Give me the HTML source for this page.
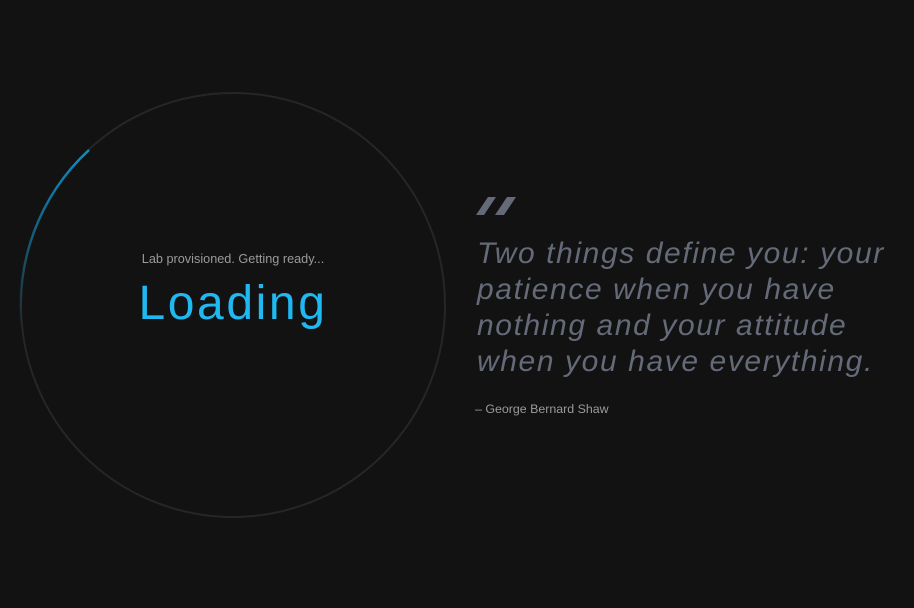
<!DOCTYPE html>
<html><head><style>
html,body{margin:0;padding:0;background:#121212;width:914px;height:608px;overflow:hidden;font-family:"Liberation Sans",sans-serif}
.sub{position:absolute;left:0;width:466px;top:252px;text-align:center;color:#9a9a9a;font-size:12.7px}
.load{position:absolute;left:0;width:466px;top:276px;text-align:center;color:#1fb8f0;font-size:48px;letter-spacing:2.6px}
.q{position:absolute;left:477px;top:236px;color:#646a78;font-style:italic;font-size:30px;line-height:36px;letter-spacing:1.6px;white-space:nowrap}
.a{position:absolute;left:475px;top:402px;color:#9a9a9a;font-size:12.4px}
</style></head><body>
<svg width="914" height="608" style="position:absolute;left:0;top:0">
<defs><linearGradient id="g" x1="0" y1="0" x2="0" y2="1">
<stop offset="0" stop-color="#0a8fc8"/><stop offset="1" stop-color="#0a8fc8" stop-opacity="0"/></linearGradient></defs>
<circle cx="233" cy="305" r="212" fill="none" stroke="#262626" stroke-width="2"/>
<path d="M89 150 A212 212 0 0 0 22 330" fill="none" stroke="url(#g)" stroke-width="2.5"/>
<polygon points="488,197 496,197 484,215 476,215" fill="#646a78"/>
<polygon points="507,197 516,197 504,215 495,215" fill="#646a78"/>
</svg>
<div class="sub">Lab provisioned. Getting ready...</div>
<div class="load">Loading</div>
<div class="q">Two things define you: your<br>patience when you have<br>nothing and your attitude<br>when you have everything.</div>
<div class="a">– George Bernard Shaw</div>
</body></html>
